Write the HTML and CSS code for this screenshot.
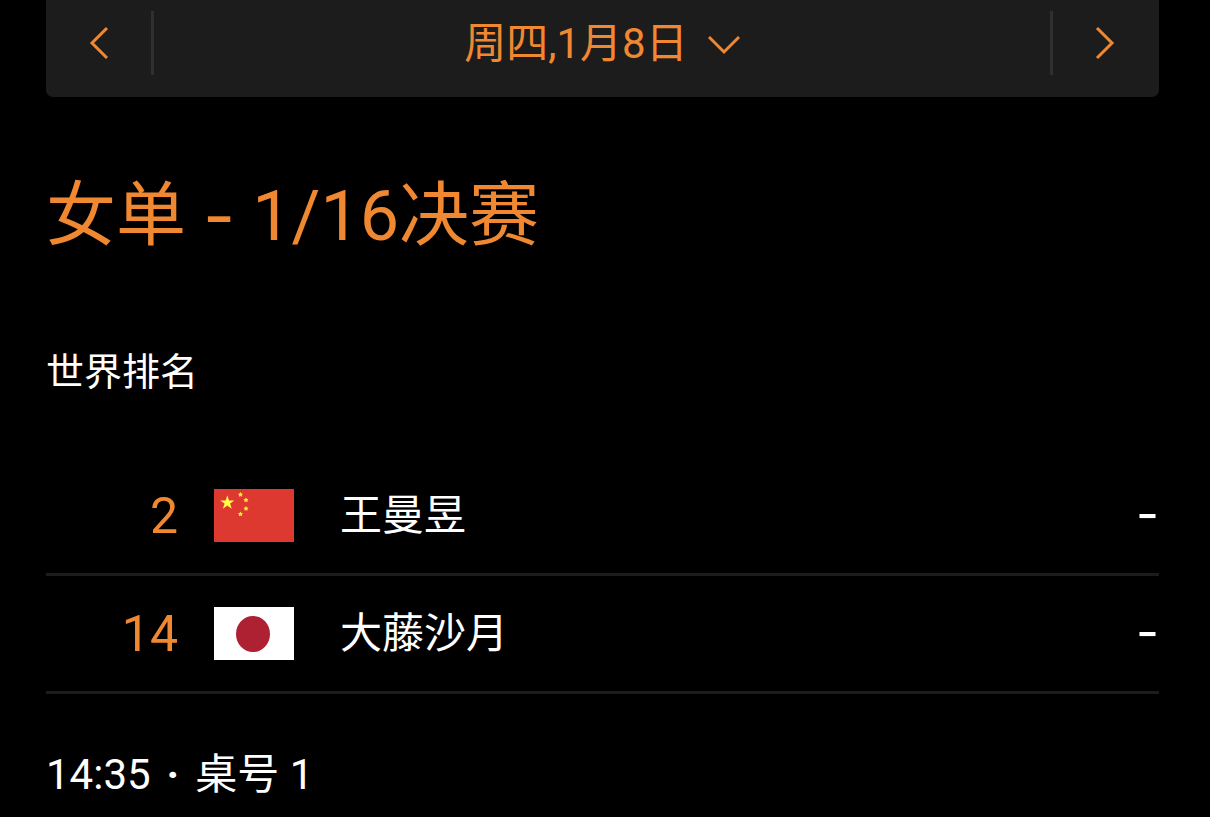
FILE: index.html
```html
<!DOCTYPE html>
<html lang="zh-CN">
<head>
<meta charset="utf-8">
<meta name="viewport" content="width=device-width, initial-scale=1">
<title>女单 - 1/16决赛</title>
<link rel="stylesheet" href="styles.css">
</head>
<body>
<main class="page">
  <nav class="date-nav">
    <button class="nav-arrow nav-prev" type="button" aria-label="前一天">
      <svg width="24" height="36" viewBox="0 0 24 36"><path d="M20 3 5 18l15 15"/></svg>
    </button>
    <button class="date-button" type="button">
      <span>周四,1月8日</span>
      <svg width="32" height="24" viewBox="0 0 32 24"><path d="M1 5l15 15L31 5"/></svg>
    </button>
    <button class="nav-arrow nav-next" type="button" aria-label="后一天">
      <svg width="24" height="36" viewBox="0 0 24 36"><path d="M3 3l15 15L3 33"/></svg>
    </button>
  </nav>
  <h1 class="title"><span>女单</span> <span class="dash">-</span> <span>1/16决赛</span></h1>
  <p class="ranking-label">世界排名</p>
  <ul class="players">
    <li class="player">
      <span class="rank">2</span>
      <svg class="flag" viewBox="0 0 80 53" role="img" aria-label="中国">
        <rect width="80" height="53" fill="#de3931"/>
        <path fill="#ffff45" d="M13.300 6.300l1.700 5.100h5.400l-4.300 3.200 1.600 5.100-4.400-3.100-4.400 3.100 1.700-5.100-4.400-3.200h5.500z"/>
        <g fill="#fbe83f">
          <path id="star" d="M26.500 3l.9 1.400 1.600.4-1.100 1.300.1 1.700-1.500-.7-1.500.7.100-1.700L24 4.800l1.600-.4z"/>
          <use href="#star" x="5.500" y="5.500"/>
          <use href="#star" x="5.500" y="14"/>
          <use href="#star" y="19.500"/>
        </g>
      </svg>
      <span class="name">王曼昱</span>
      <span class="score">-</span>
    </li>
    <li class="player">
      <span class="rank">14</span>
      <svg class="flag" viewBox="0 0 80 53" role="img" aria-label="日本">
        <rect width="80" height="53" fill="#fff"/>
        <ellipse cx="39" cy="27" rx="17" ry="18" fill="#ad2133"/>
      </svg>
      <span class="name">大藤沙月</span>
      <span class="score">-</span>
    </li>
  </ul>
  <p class="schedule"><span>14:35</span> <span class="dot">·</span> <span>桌号 1</span></p>
</main>
</body>
</html>
```
FILE: styles.css
```css
* {
  box-sizing: border-box;
}

body {
  margin: 0;
  background: #000;
  color: #fff;
  font-family: Roboto, "Noto Sans CJK SC", sans-serif;
  font-size: 42px;
  line-height: 60px;
}

.page {
  padding: 0 51px 0 46px;
}

.date-nav {
  display: flex;
  align-items: center;
  padding: 11px 0 22px;
  background: #1c1c1c;
  border-radius: 0 0 7px 7px;
  color: #f08832;
}

.date-nav button {
  display: flex;
  align-items: center;
  justify-content: center;
  height: 64px;
  padding: 0;
  border: 0;
  background: none;
  color: inherit;
  font: inherit;
  cursor: pointer;
}

.date-nav svg {
  fill: none;
  stroke: currentColor;
  stroke-width: 3;
}

.date-nav .nav-arrow {
  width: 108px;
}

.date-nav .nav-prev {
  border-right: 3px solid #303030;
}

.date-nav .nav-next {
  width: 109px;
  border-left: 3px solid #303030;
}

.date-nav .date-button {
  flex: 1;
  gap: 20px;
  padding-top: 2px;
}

.title {
  display: flex;
  gap: 17px;
  margin: 67px 0 0;
  color: #f08832;
  font-size: 70px;
  font-weight: 400;
  line-height: 104px;
}

.dash,
.score {
  font-family: Inter, sans-serif;
}

.ranking-label {
  margin: 74px 0 0;
  font-size: 38px;
}

.players {
  margin: 56px 0 0;
  padding: 0;
  list-style: none;
}

.player {
  display: flex;
  align-items: center;
  height: 118px;
  border-bottom: 3px solid #1c1c1c;
}

.rank {
  width: 132px;
  color: #f08832;
  font-size: 50px;
  text-align: right;
}

.flag {
  flex: none;
  width: 80px;
  height: 53px;
  margin: 0 46px 0 36px;
}

.name {
  flex: 1;
}

.score {
  font-size: 50px;
  line-height: 56px;
  padding-bottom: 4px;
}

.schedule {
  display: flex;
  gap: 16px;
  margin: 51px 0 0;
}

.dot {
  font-weight: 700;
}
```
